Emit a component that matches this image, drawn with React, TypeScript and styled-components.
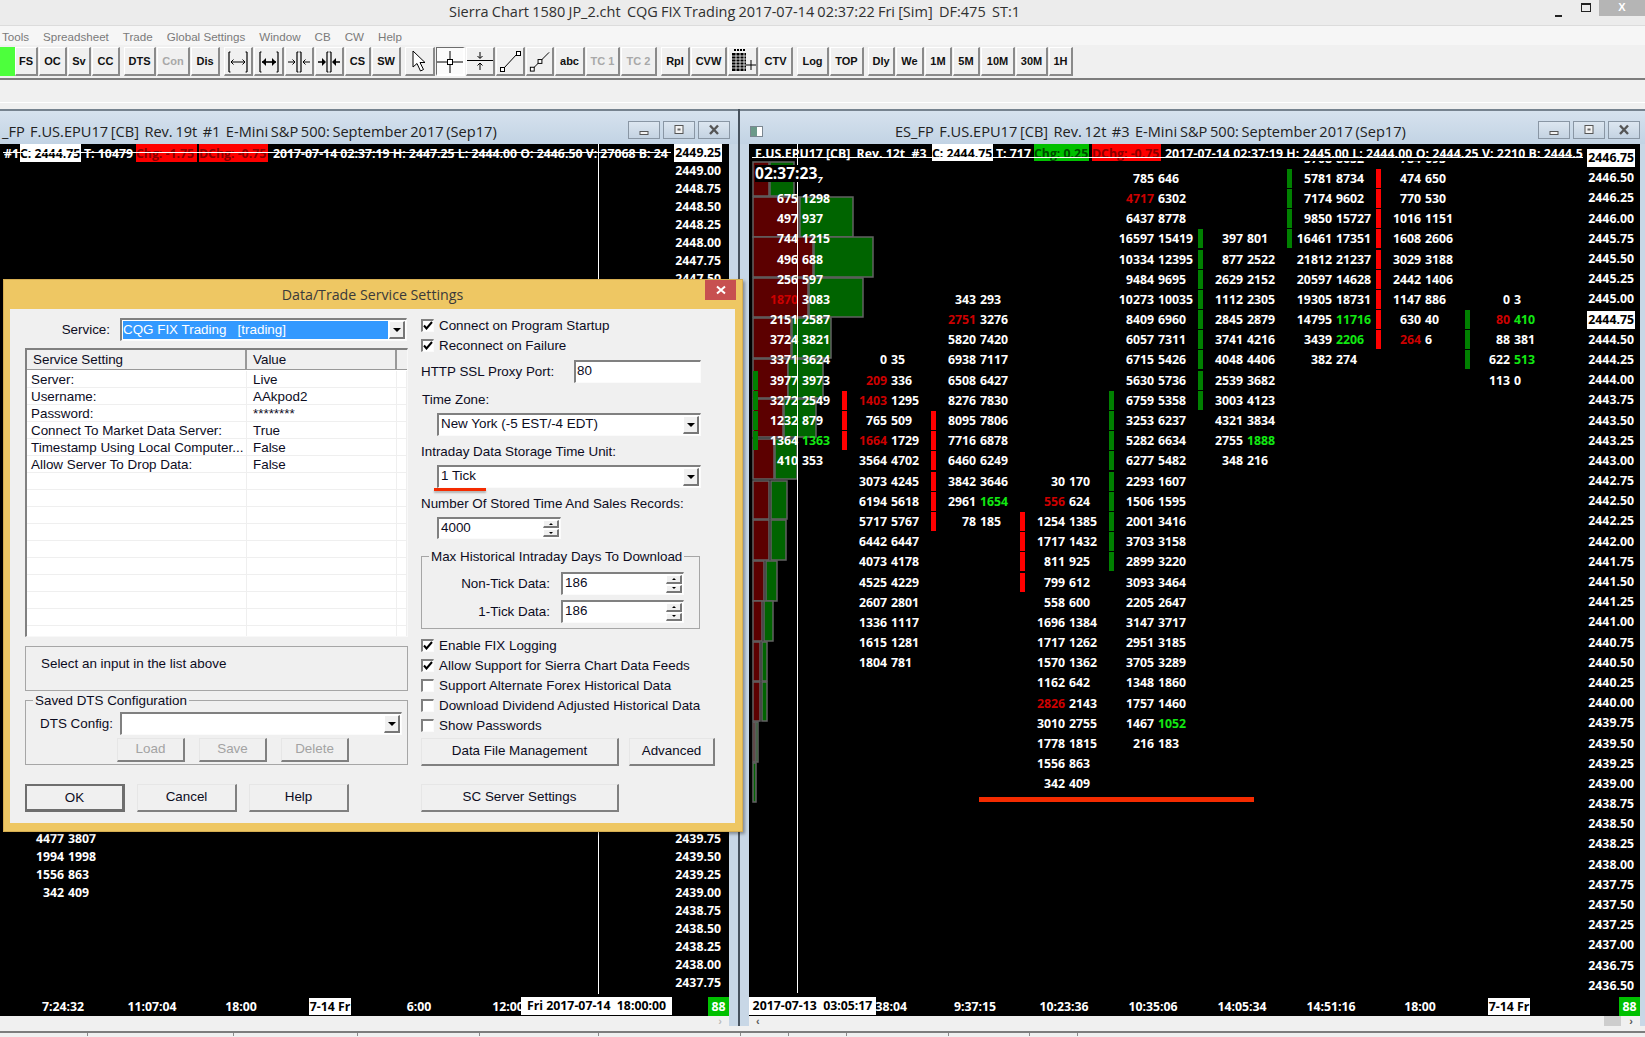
import React from "react";
import styled, { createGlobalStyle } from "styled-components";

const ui = '"Liberation Sans", Arial, sans-serif';
const seg = '"Open Sans", "Liberation Sans", sans-serif';
const num = '"Open Sans", "Liberation Sans", sans-serif';

const Global = createGlobalStyle`
  html, body { margin: 0; padding: 0; background: #f0f0f0; }
  * { box-sizing: border-box; }
`;

const Page = styled.div`
  position: relative;
  display: flex;
  flex-direction: column;
  width: 1645px;
  height: 1037px;
  overflow: hidden;
  background: #f0f0f0;
  font-family: ${ui};
`;

/* ---------- app chrome ---------- */

const TitleBar = styled.div`
  display: flex;
  height: 26px;
  padding-left: 449px;
  background: #ececec;
  border-bottom: 1px solid #dcdcdc;
  font: 14.5px/23px ${seg};
  word-spacing: -0.6px;
  color: #303030;
  white-space: pre;
`;

const Controls = styled.div`
  display: flex;
  align-items: flex-start;
  margin-left: auto;
`;

const Minimize = styled.div`
  width: 7px;
  height: 2px;
  margin: 15px 19px 0 0;
  background: #222;
`;

const Maximize = styled.div`
  width: 10px;
  height: 9px;
  margin: 3px 8px 0 0;
  border: 1px solid #222;
  border-top-width: 2px;
`;

const CloseApp = styled.div`
  width: 46px;
  height: 16px;
  background: #b5b5b5;
  color: #fff;
  font: 700 11px/14px ${ui};
  word-spacing: 0;
  text-align: center;
`;

const MenuBar = styled.div`
  display: flex;
  gap: 14px;
  height: 19px;
  padding-left: 2px;
  background: #f6f6f6;
  color: #7a7a7a;
  font-size: 11.6px;
  line-height: 21px;
`;

const Toolbar = styled.div`
  display: flex;
  gap: 4px;
  height: 35px;
  padding-top: 2px;
  background: #f0f0f0;
  border-bottom: 2px solid #7d7d7d;
`;

const GreenLamp = styled.div`
  width: 15px;
  height: 29px;
  margin-right: -4px;
  background: #4dff3c;
`;

const ToolGroup = styled.div`
  display: flex;
  gap: 1px;
`;

const ToolButton = styled.div<{ $w: number; $off?: boolean; $on?: boolean }>`
  display: flex;
  align-items: center;
  justify-content: center;
  width: ${(p) => p.$w}px;
  height: 29px;
  background: ${(p) => (p.$on ? "#fbfbfb" : "#f0f0f0")};
  border-style: solid;
  border-width: 1px 2px 2px 1px;
  border-color: ${(p) => (p.$on ? "#6d6d6d #fff #fff #6d6d6d" : "#fff #8a8a8a #8a8a8a #fff")};
  color: ${(p) => (p.$off ? "#a8a8a8" : "#111")};
  font: 700 11px ${ui};
  white-space: nowrap;
`;

const Strip = styled.div`
  height: 23px;
  margin-bottom: 6px;
  border-bottom: 1px solid #fff;
`;

const Workspace = styled.div`
  display: flex;
  height: 917px;
`;

const BottomStrip = styled.div`
  height: 10px;
  padding-top: 5px;
`;

const TabRow = styled.div`
  display: flex;
  height: 5px;
  border-top: 2px solid #7d7d7d;
`;

const Tab = styled.div<{ $w: number }>`
  width: ${(p) => p.$w}px;
  border-right: 1px solid #8a8a8a;
`;

/* ---------- chart windows ---------- */

const ChartWindow = styled.div<{ $left?: boolean }>`
  display: flex;
  flex-direction: column;
  width: ${(p) => (p.$left ? 740 : 905)}px;
  background: #c8d7e6;
  border-right: ${(p) => (p.$left ? "2px solid #47525e" : "none")};
`;

const WindowTitle = styled.div<{ $pad: number }>`
  display: flex;
  align-items: center;
  flex: none;
  height: 35px;
  padding-top: 7px;
  padding-left: ${(p) => p.$pad}px;
  background: linear-gradient(#d6e2ee, #c2d3e4);
  border-top: 2px solid #76838f;
  font: 14.6px ${seg};
  word-spacing: -1.1px;
  color: #222;
  white-space: pre;
`;

const WindowIcon = styled.span`
  width: 13px;
  height: 11px;
  margin-right: 132px;
  background: linear-gradient(90deg, #6c9a8a 50%, #fff 50%);
  border: 1px solid #7b8791;
`;

const WindowButtons = styled.div<{ $right: number }>`
  display: flex;
  gap: 3px;
  margin-top: -3px;
  margin-left: auto;
  margin-right: ${(p) => p.$right}px;
`;

const WindowButton = styled.div`
  display: flex;
  align-items: center;
  justify-content: center;
  width: 32px;
  height: 18px;
  background: linear-gradient(#dce6f0, #c4d3e2);
  border: 1px solid #8996a4;
`;

const WindowBody = styled.div<{ $left?: boolean }>`
  display: flex;
  flex: 1;
  min-height: 0;
  padding: ${(p) => (p.$left ? "0 9px 0 0" : "0 5px 0 9px")};
`;

const ChartColumn = styled.div`
  display: flex;
  flex: 1;
  flex-direction: column;
  min-width: 0;
`;

const ChartSurface = styled.div`
  position: relative;
  display: flex;
  flex-direction: column;
  height: 872px;
  overflow: hidden;
  background: #000;
  color: #fff;
  font: 700 12.3px ${num};
`;

const PlotRow = styled.div<{ $top: number }>`
  display: flex;
  flex: 1;
  min-height: 0;
  padding-top: ${(p) => p.$top}px;
`;

const FootprintGrid = styled.div<{ $pitch: number; $rows: number; $pad: number; $cols: number }>`
  position: relative;
  z-index: 1;
  display: grid;
  flex: none;
  align-content: start;
  grid-template-columns: repeat(${(p) => p.$cols}, 89px);
  grid-template-rows: repeat(${(p) => p.$rows}, ${(p) => p.$pitch}px);
  margin-left: ${(p) => p.$pad}px;
`;

const Cell = styled.div<{ $col: number; $row: number }>`
  display: grid;
  grid-column: ${(p) => p.$col};
  grid-row: ${(p) => p.$row};
  grid-template-columns: 5px 40px 4px 40px;
  align-items: center;
  white-space: nowrap;
`;

const Marker = styled.span<{ $tone: "red" | "green" }>`
  grid-column: 1;
  height: 19px;
  background: ${(p) => (p.$tone === "red" ? "#ff0000" : "#008000")};
`;

const Bid = styled.span<{ $tone?: string }>`
  grid-column: 2;
  text-align: right;
  color: ${(p) => p.$tone || "#fff"};
`;

const Ask = styled.span<{ $tone?: string }>`
  grid-column: 4;
  color: ${(p) => p.$tone || "#fff"};
`;

const PriceAxis = styled.div<{ $pitch: number; $right: number }>`
  position: relative;
  z-index: 3;
  display: grid;
  grid-auto-rows: ${(p) => p.$pitch}px;
  align-items: center;
  justify-items: end;
  align-content: start;
  margin-left: auto;
  padding-right: ${(p) => p.$right}px;
`;

const Price = styled.span<{ $on?: boolean }>`
  padding: 0 1px;
  line-height: 18px;
  background: ${(p) => (p.$on ? "#fff" : "transparent")};
  color: ${(p) => (p.$on ? "#000" : "#fff")};
`;

const Quote = styled.div<{ $width: number; $height: number; $rule: number }>`
  position: absolute;
  z-index: 2;
  top: 0;
  left: 0;
  display: flex;
  width: ${(p) => p.$width}px;
  height: ${(p) => p.$height}px;
  overflow: hidden;
  background: #000;
  white-space: pre;
  line-height: 20px;

  &::after {
    content: "";
    position: absolute;
    left: 3px;
    right: 0;
    top: ${(p) => p.$rule}px;
    height: 1px;
    background: #fff;
  }
`;

const QuoteCell = styled.span<{ $w?: number; $kind?: "white" | "red" | "green"; $ml?: number; $track?: number }>`
  flex: ${(p) => (p.$w ? `0 0 ${p.$w}px` : "1")};
  margin-left: ${(p) => p.$ml || 0}px;
  overflow: hidden;
  letter-spacing: ${(p) => p.$track || 0}px;
  background: ${(p) =>
    p.$kind === "white" ? "#fff" : p.$kind === "red" ? "#ff0000" : p.$kind === "green" ? "#00c000" : "transparent"};
  color: ${(p) =>
    p.$kind === "white" ? "#000" : p.$kind === "red" ? "#8a0000" : p.$kind === "green" ? "#004a00" : "#fff"};
`;

const CursorLine = styled.div<{ $x: number; $h: number }>`
  position: absolute;
  z-index: 2;
  top: 0;
  left: ${(p) => p.$x}px;
  width: 1px;
  height: ${(p) => p.$h}px;
  background: #fff;
`;

const Profile = styled.svg`
  position: absolute;
  top: 0;
  left: 0;
`;

const Clock = styled.div`
  position: absolute;
  z-index: 2;
  top: 21px;
  left: 6px;
  width: 69px;
  height: 17px;
  background: #000;
  font: 700 15.6px/17px ${num};
`;

const ClockTail = styled.span`
  font-size: 9px;
  font-style: italic;
  vertical-align: -4px;
`;

const SessionLine = styled.div`
  position: absolute;
  z-index: 2;
  left: 230px;
  top: 653px;
  width: 275px;
  height: 5px;
  background: #f42b00;
`;

const TimeAxis = styled.div<{ $pad: number }>`
  position: relative;
  display: flex;
  flex: none;
  align-items: center;
  height: 19px;
  padding-left: ${(p) => p.$pad}px;
`;

const TimeLabel = styled.span`
  flex: 0 0 89px;
  text-align: center;
`;

const DayBox = styled.span`
  padding: 0 1px;
  background: #fff;
  color: #000;
  line-height: 18px;
`;

const StampBox = styled.span<{ $x: number; $w: number }>`
  position: absolute;
  top: 0;
  left: ${(p) => p.$x}px;
  width: ${(p) => p.$w}px;
  height: 18px;
  background: #fff;
  color: #000;
  line-height: 18px;
  text-align: center;
  white-space: pre;
`;

const CountBox = styled.span`
  position: absolute;
  top: 0;
  right: 0;
  width: 21px;
  height: 19px;
  background: #00c000;
  line-height: 19px;
  text-align: center;
`;

const ScrollRow = styled.div`
  display: flex;
  align-items: center;
  flex: none;
  height: 10px;
  padding: 0 7px;
  background: #f0f0f0;
  color: #555;
  font: 700 11px/10px ${ui};
`;

const ThumbArea = styled.div`
  display: flex;
  align-items: center;
  gap: 8px;
  margin-left: auto;
`;

const Thumb = styled.span`
  width: 17px;
  height: 10px;
  background: #cdcdcd;
`;

const Faint = styled.span`
  color: #bbb;
`;

/* ---------- settings dialog ---------- */

const Dialog = styled.div`
  position: absolute;
  z-index: 10;
  top: 279px;
  left: 3px;
  display: flex;
  flex-direction: column;
  width: 740px;
  height: 553px;
  padding: 0 7px 8px 6px;
  background: #eec763;
  border: 1px solid #d6ae52;
  box-shadow: 2px 2px 3px rgba(0, 0, 0, 0.35);
  color: #0c0c1e;
  font: 13.4px ${ui};
`;

const DialogTitle = styled.div`
  position: relative;
  flex: none;
  height: 29px;
  font: 14.2px/29px ${seg};
  color: #3a3a3a;
  text-align: center;
`;

const DialogClose = styled.div`
  position: absolute;
  top: 0;
  right: -1px;
  display: flex;
  align-items: center;
  justify-content: center;
  width: 31px;
  height: 20px;
  background: #c75050;
`;

const Client = styled.div`
  display: flex;
  flex: 1;
  gap: 13px;
  padding: 6px 0 0 15px;
  background: #f0f0f0;
`;

const LeftPane = styled.div`
  display: flex;
  flex-direction: column;
  width: 383px;
  padding-top: 3px;
`;

const RightPane = styled.div`
  position: relative;
  display: flex;
  flex-direction: column;
  width: 294px;
`;

const FieldRow = styled.div<{ $mt?: number }>`
  display: flex;
  align-items: center;
  margin-top: ${(p) => p.$mt || 0}px;
`;

const FieldLabel = styled.span<{ $w: number; $right?: boolean }>`
  flex: 0 0 ${(p) => p.$w}px;
  text-align: ${(p) => (p.$right ? "right" : "left")};
  white-space: nowrap;
`;

const Sunken = styled.div<{ $w: number; $h?: number; $ml?: number }>`
  position: relative;
  display: flex;
  align-items: center;
  justify-content: space-between;
  flex: none;
  width: ${(p) => p.$w}px;
  height: ${(p) => p.$h || 23}px;
  margin-left: ${(p) => p.$ml || 0}px;
  padding: 1px 1px 1px 2px;
  background: #fff;
  border-style: solid;
  border-width: 2px 1px 1px 2px;
  border-color: #808080 #fbfbfb #fbfbfb #808080;
  white-space: pre;
`;

const FieldText = styled.span<{ $tight?: boolean }>`
  margin-bottom: 3px;
  margin-left: ${(p) => (p.$tight ? -1 : 0)}px;
`;

const Selected = styled.span`
  flex: 1;
  align-self: stretch;
  margin-right: 1px;
  margin-left: -1px;
  background: #3399ff;
  color: #fff;
  line-height: 17px;
`;

const DropButton = styled.span`
  display: flex;
  align-items: center;
  justify-content: center;
  flex: none;
  align-self: stretch;
  width: 16px;
  background: #f0f0f0;
  border-style: solid;
  border-width: 1px 2px 2px 1px;
  border-color: #fff #777 #777 #fff;

  &::after {
    content: "";
    border-style: solid;
    border-width: 4px 4px 0;
    border-color: #000 transparent transparent;
  }
`;

const SpinStack = styled.span`
  display: flex;
  flex-direction: column;
  flex: none;
  gap: 1px;
  align-self: stretch;
  width: 16px;
`;

const SpinPart = styled.span<{ $up?: boolean }>`
  display: flex;
  align-items: center;
  justify-content: center;
  flex: 1;
  background: #f0f0f0;
  border-style: solid;
  border-width: 1px 2px 2px 1px;
  border-color: #fff #777 #777 #fff;

  &::after {
    content: "";
    border-style: solid;
    border-width: ${(p) => (p.$up ? "0 2px 2px" : "2px 2px 0")};
    border-color: ${(p) => (p.$up ? "transparent transparent #000" : "#000 transparent transparent")};
  }
`;

const ListBox = styled.div`
  flex: none;
  height: 289px;
  margin-top: 7px;
  overflow: hidden;
  background: #fff;
  border-style: solid;
  border-width: 2px 1px 1px 2px;
  border-color: #808080 #f8f8f8 #f8f8f8 #808080;
`;

const ListHead = styled.div`
  display: grid;
  grid-template-columns: 220px 150px 1fr;
  height: 20px;
  margin-bottom: 1px;
  background: #f0f0f0;
  border-bottom: 1px solid #999;
  line-height: 19px;
`;

const HeadCell = styled.span`
  padding-left: 6px;
  border-right: 2px solid #999;
`;

const ListRow = styled.div`
  display: grid;
  grid-template-columns: 220px 150px 1fr;
  height: 17px;
  border-bottom: 1px solid #efefef;
  line-height: 18px;
  white-space: nowrap;
`;

const RowCell = styled.span`
  padding-left: 4px;
  overflow: hidden;
  border-right: 1px solid #efefef;

  & + & {
    padding-left: 6px;
  }
`;

const HelpBox = styled.div`
  flex: none;
  height: 45px;
  margin-top: 9px;
  padding: 9px 0 0 15px;
  border: 1px solid #a6a6a6;
`;

const GroupBox = styled.div<{ $h: number; $w?: number; $mt: number; $pt: number }>`
  position: relative;
  flex: none;
  width: ${(p) => (p.$w ? `${p.$w}px` : "auto")};
  height: ${(p) => p.$h}px;
  margin-top: ${(p) => p.$mt}px;
  padding-top: ${(p) => p.$pt}px;
  border: 1px solid #a6a6a6;
`;

const GroupLegend = styled.span`
  position: absolute;
  top: -8px;
  left: 7px;
  padding: 0 2px;
  background: #f0f0f0;
  line-height: 15px;
  white-space: nowrap;
`;

const ButtonRow = styled.div<{ $mt: number; $gap: number; $ml?: number }>`
  display: flex;
  gap: ${(p) => p.$gap}px;
  margin-top: ${(p) => p.$mt}px;
  margin-left: ${(p) => p.$ml || 0}px;
`;

const PushButton = styled.div<{ $w: number; $h?: number; $off?: boolean; $main?: boolean }>`
  flex: none;
  width: ${(p) => p.$w}px;
  height: ${(p) => p.$h || 28}px;
  background: #f0f0f0;
  border-style: solid;
  border-width: ${(p) => (p.$main ? "2px 3px 3px 2px" : "1px 2px 2px 1px")};
  border-color: ${(p) => (p.$main ? "#6e6e6e" : "#e6e6e6 #808080 #808080 #e6e6e6")};
  color: ${(p) => (p.$off ? "#a3a3a3" : "#0c0c1e")};
  line-height: ${(p) => (p.$h || 28) - 4}px;
  text-align: center;
  white-space: nowrap;
`;

const CheckRow = styled.div`
  display: flex;
  align-items: center;
  gap: 5px;
  height: 20px;
  white-space: nowrap;
`;

const CheckBox = styled.span`
  display: flex;
  align-items: center;
  justify-content: center;
  width: 13px;
  height: 13px;
  background: #fff;
  border-style: solid;
  border-width: 2px 1px 1px 2px;
  border-color: #808080 #fbfbfb #fbfbfb #808080;
`;

const PlainLabel = styled.div<{ $mt: number; $ml?: number }>`
  height: 18px;
  margin-top: ${(p) => p.$mt}px;
  margin-left: ${(p) => p.$ml || 0}px;
  line-height: 18px;
  white-space: nowrap;
`;

const RedMark = styled.div`
  position: absolute;
  top: 173px;
  left: 13px;
  width: 52px;
  height: 3px;
  background: #f42b00;
  box-shadow: 0 2px 2px rgba(0, 0, 0, 0.25);
`;

/* ---------- icons ---------- */

type GlyphName = "spread" | "spreadBold" | "pinch" | "pinchBold" | "pointer" | "cross" | "level" | "line" | "ray" | "table";

const Glyph = ({ name }: { name: GlyphName }) => {
  const stems = (a: number, b: number) => (
    <path d={`M${a} 4v20M${b} 4v20M${a} 4h1.5M${b} 4h-1.5M${a} 24h1.5M${b} 24h-1.5`} stroke="#000" strokeWidth="1.2" fill="none" />
  );
  return (
    <svg width="26" height="26" viewBox="0 0 26 26">
      {name === "spread" && (
        <>
          {stems(4, 22)}
          <path d="M6 14h14M8.500 11.500 6 14l2.500 2.500M17.500 11.500 20 14l-2.500 2.500" stroke="#000" fill="none" />
        </>
      )}
      {name === "spreadBold" && (
        <>
          {stems(4, 22)}
          <path d="M6 14h14" stroke="#000" strokeWidth="1.6" />
          <path d="M10 10v8l-4-4zM16 10v8l4-4z" />
        </>
      )}
      {name === "pinch" && (
        <>
          {stems(11, 15)}
          <path d="M2 14h7M6.500 11.500 9 14l-2.500 2.500M17 14h7M19.500 11.500 17 14l2.500 2.500" stroke="#000" fill="none" />
        </>
      )}
      {name === "pinchBold" && (
        <>
          {stems(11, 15)}
          <path d="M2 14h5M19 14h5" stroke="#000" strokeWidth="1.6" />
          <path d="M6 10v8l4-4zM20 10v8l-4-4z" />
        </>
      )}
      {name === "pointer" && <path d="M6 3v16l4-3.500 3.500 7.500 3-1.500-3.500-7h5z" fill="#fff" stroke="#000" />}
      {name === "cross" && (
        <>
          <path d="M0 14h26M13 3v22" stroke="#000" />
          <rect x="10.500" y="11.500" width="5" height="5" fill="#fff" stroke="#000" />
        </>
      )}
      {name === "level" && <path d="M0 12.500h26M13 4v6M10.500 8 13 10.500 15.500 8M13 15v7M10.500 17.500 13 15l2.500 2.500" stroke="#000" fill="none" />}
      {name === "line" && (
        <>
          <path d="M7 20 20 6" stroke="#000" />
          <rect x="3.500" y="19.500" width="4" height="4" fill="#fff" stroke="#000" />
          <rect x="19.500" y="3.500" width="4" height="4" fill="#fff" stroke="#000" />
        </>
      )}
      {name === "ray" && (
        <>
          <path d="M6 21 23 4" stroke="#000" />
          <rect x="3.500" y="19.500" width="4" height="4" fill="#fff" stroke="#000" />
          <rect x="11.500" y="11.500" width="4" height="4" fill="#fff" stroke="#000" />
        </>
      )}
      {name === "table" && (
        <>
          <path d="M4 2h11" stroke="#000" strokeDasharray="2 1" strokeWidth="2" />
          <rect x="2" y="5" width="14" height="18" />
          <path d="M2 8h14M2 11h14M2 14h14M2 17h14M2 20h14M6 5v18M10 5v18M14 5v18" stroke="#fff" strokeWidth=".8" />
          <path d="M16 17h10M21 12v10" stroke="#000" />
        </>
      )}
    </svg>
  );
};

const Tick = () => (
  <svg width="10" height="9" viewBox="0 0 10 9">
    <path d="M1 4.500 3.500 7.500 9 1" stroke="#000" strokeWidth="2" fill="none" />
  </svg>
);

const WinGlyph = ({ kind }: { kind: "min" | "max" | "close" }) => (
  <svg width="14" height="12" viewBox="0 0 14 12">
    {kind === "min" && <rect x="3" y="7.500" width="8" height="3" fill="#f4f4f4" stroke="#555" />}
    {kind === "max" && (
      <>
        <rect x="3" y="1.500" width="8" height="8" fill="#f4f4f4" stroke="#555" />
        <rect x="5.500" y="4.500" width="3" height="2" fill="#666" />
      </>
    )}
    {kind === "close" && <path d="M3 1.500 11 10M11 1.500 3 10" stroke="#555" strokeWidth="2.400" />}
  </svg>
);

/* ---------- data ---------- */

const RED = "#cc0000";
const GREEN = "#12e812";

const toolGroups: { label?: string; icon?: GlyphName; w: number; off?: boolean; on?: boolean }[][] = [
  [{ label: "FS", w: 23 }, { label: "OC", w: 28 }, { label: "Sv", w: 23 }, { label: "CC", w: 28 }],
  [{ label: "DTS", w: 32 }, { label: "Con", w: 33, off: true }, { label: "Dis", w: 29 }],
  [
    { icon: "spread", w: 29 },
    { icon: "spreadBold", w: 30 },
    { icon: "pinch", w: 29 },
    { icon: "pinchBold", w: 29 },
    { label: "CS", w: 26 },
    { label: "SW", w: 29 },
  ],
  [
    { icon: "pointer", w: 30 },
    { icon: "cross", w: 29, on: true },
    { icon: "level", w: 29 },
    { icon: "line", w: 29 },
    { icon: "ray", w: 28 },
    { label: "abc", w: 30 },
    { label: "TC 1", w: 34, off: true },
    { label: "TC 2", w: 36, off: true },
  ],
  [{ label: "Rpl", w: 29 }, { label: "CVW", w: 36 }, { icon: "table", w: 30 }, { label: "CTV", w: 34 }],
  [{ label: "Log", w: 32 }, { label: "TOP", w: 34 }],
  [
    { label: "Dly", w: 27 },
    { label: "We", w: 28 },
    { label: "1M", w: 27 },
    { label: "5M", w: 27 },
    { label: "10M", w: 34 },
    { label: "30M", w: 32 },
    { label: "1H", w: 24 },
  ],
];

// a trailing r or g on a figure marks it as a red or green print
type FootColumn = { col: number; start: number; marks?: [number, number, "red" | "green"]; rows: string[] };

const footprint: FootColumn[] = [
  {
    col: 1, start: 1, marks: [10, 13, "green"],
    rows: ["675 1298", "497 937", "744 1215", "496 688", "256 597", "1870r 3083", "2151 2587", "3724 3821", "3371 3624", "3977 3973", "3272 2549", "1232 879", "1364 1363g", "410 353"],
  },
  {
    col: 2, start: 9, marks: [11, 13, "red"],
    rows: ["0 35", "209r 336", "1403r 1295", "765 509", "1664r 1729", "3564 4702", "3073 4245", "6194 5618", "5717 5767", "6442 6447", "4073 4178", "4525 4229", "2607 2801", "1336 1117", "1615 1281", "1804 781"],
  },
  {
    col: 3, start: 6, marks: [12, 17, "red"],
    rows: ["343 293", "2751r 3276", "5820 7420", "6938 7117", "6508 6427", "8276 7830", "8095 7806", "7716 6878", "6460 6249", "3842 3646", "2961 1654g", "78 185"],
  },
  {
    col: 4, start: 15, marks: [17, 20, "red"],
    rows: ["30 170", "556r 624", "1254 1385", "1717 1432", "811 925", "799 612", "558 600", "1696 1384", "1717 1262", "1570 1362", "1162 642", "2826r 2143", "3010 2755", "1778 1815", "1556 863", "342 409"],
  },
  {
    col: 5, start: 0, marks: [11, 19, "green"],
    rows: ["785 646", "4717r 6302", "6437 8778", "16597 15419", "10334 12395", "9484 9695", "10273 10035", "8409 6960", "6057 7311", "6715 5426", "5630 5736", "6759 5358", "3253 6237", "5282 6634", "6277 5482", "2293 1607", "1506 1595", "2001 3416", "3703 3158", "2899 3220", "3093 3464", "2205 2647", "3147 3717", "2951 3185", "3705 3289", "1348 1860", "1757 1460", "1467 1052g", "216 183"],
  },
  {
    col: 6, start: 3, marks: [3, 11, "green"],
    rows: ["397 801", "877 2522", "2629 2152", "1112 2305", "2845 2879", "3741 4216", "4048 4406", "2539 3682", "3003 4123", "4321 3834", "2755 1888g", "348 216"],
  },
  {
    col: 7, start: -1, marks: [0, 3, "green"],
    rows: ["5708 8652", "5781 8734", "7174 9602", "9850 15727", "16461 17351", "21812 21237", "20597 14628", "19305 18731", "14795 11716g", "3439 2206g", "382 274"],
  },
  {
    col: 8, start: -1, marks: [0, 8, "red"],
    rows: ["784 695", "474 650", "770 530", "1016 1151", "1608 2606", "3029 3188", "2442 1406", "1147 886", "630 40", "264r 6"],
  },
  {
    col: 9, start: 6, marks: [7, 9, "green"],
    rows: ["0 3", "80r 410g", "88 381", "622 513g", "113 0"],
  },
];

const oldFootprint: FootColumn[] = [
  { col: 1, start: 38, rows: ["4477 3807", "1994 1998", "1556 863", "342 409"] },
];

const profileBars = [
  [163, 197, 769, 770, 794],
  [198, 238, 799, 800, 853],
  [238, 278, 813, 814, 873],
  [279, 318, 808, 809, 863],
  [319, 359, 791, 792, 831],
  [360, 399, 788, 788, 823],
  [400, 438, 783, 784, 816],
  [440, 480, 774, 775, 797],
  [482, 520, 769, 771, 787],
  [521, 561, 769, 771, 786],
  [562, 602, 764, 766, 777],
  [602, 642, 762, 764, 773],
  [643, 682, 760, 762, 767],
  [683, 722, 760, 762, 767],
  [723, 763, 755, 756, 758],
  [764, 803, 753, 753, 756],
];

const settings = [
  ["Server:", "Live"],
  ["Username:", "AAkpod2"],
  ["Password:", "********"],
  ["Connect To Market Data Server:", "True"],
  ["Timestamp Using Local Computer...", "False"],
  ["Allow Server To Drop Data:", "False"],
];

const tabWidths = [88, 146, 124, 122, 119, 142, 48, 58, 102, 81, 48];

const parseFigure = (text: string) => {
  const last = text[text.length - 1];
  if (last === "r") return { value: text.slice(0, -1), tone: RED };
  if (last === "g") return { value: text.slice(0, -1), tone: GREEN };
  return { value: text, tone: undefined };
};

// offset maps a price index to its grid row
const FootCells = ({ columns, offset }: { columns: FootColumn[]; offset: number }) => (
  <>
    {columns.map((c) =>
      c.rows.map((row, i) => {
        const index = c.start + i;
        const [left, right] = row.split(" ").map(parseFigure);
        const marked = c.marks && index >= c.marks[0] && index <= c.marks[1];
        return (
          <Cell key={`${c.col}-${index}`} $col={c.col} $row={index + offset}>
            {marked && <Marker $tone={c.marks![2]} />}
            <Bid $tone={left.tone}>{left.value}</Bid>
            <Ask $tone={right.tone}>{right.value}</Ask>
          </Cell>
        );
      })
    )}
  </>
);

const prices = (from: number, count: number) =>
  Array.from({ length: count }, (_, i) => (from - i * 0.25).toFixed(2));

const Combo = ({ w, ml, children }: { w: number; ml?: number; children?: React.ReactNode }) => (
  <Sunken $w={w} $ml={ml}>
    <FieldText>{children}</FieldText>
    <DropButton />
  </Sunken>
);

const Spin = ({ w, h, ml, children }: { w: number; h?: number; ml?: number; children: React.ReactNode }) => (
  <Sunken $w={w} $h={h} $ml={ml}>
    <FieldText>{children}</FieldText>
    <SpinStack>
      <SpinPart $up />
      <SpinPart />
    </SpinStack>
  </Sunken>
);

const Check = ({ on, children }: { on?: boolean; children: React.ReactNode }) => (
  <CheckRow>
    <CheckBox>{on && <Tick />}</CheckBox>
    {children}
  </CheckRow>
);

const App = () => (
  <Page>
    <Global />
    <TitleBar>
      {"Sierra Chart 1580 JP_2.cht  CQG FIX Trading 2017-07-14 02:37:22 Fri [Sim]  DF:475  ST:1"}
      <Controls>
        <Minimize />
        <Maximize />
        <CloseApp>X</CloseApp>
      </Controls>
    </TitleBar>
    <MenuBar>
      {["Tools", "Spreadsheet", "Trade", "Global Settings", "Window", "CB", "CW", "Help"].map((m) => (
        <span key={m}>{m}</span>
      ))}
    </MenuBar>
    <Toolbar>
      <GreenLamp />
      {toolGroups.map((group, g) => (
        <ToolGroup key={g}>
          {group.map((b, i) => (
            <ToolButton key={i} $w={b.w} $off={b.off} $on={b.on}>
              {b.icon ? <Glyph name={b.icon} /> : b.label}
            </ToolButton>
          ))}
        </ToolGroup>
      ))}
    </Toolbar>
    <Strip />
    <Workspace>
      <ChartWindow $left>
        <WindowTitle $pad={2}>
          {"_FP  F.US.EPU17 [CB]  Rev. 19t  #1  E-Mini S&P 500: September 2017 (Sep17)"}
          <WindowButtons $right={8}>
            <WindowButton><WinGlyph kind="min" /></WindowButton>
            <WindowButton><WinGlyph kind="max" /></WindowButton>
            <WindowButton><WinGlyph kind="close" /></WindowButton>
          </WindowButtons>
        </WindowTitle>
        <WindowBody $left>
          <ChartColumn>
            <ChartSurface>
              <PlotRow $top={0}>
                <FootprintGrid $pitch={18.05} $rows={47} $pad={19} $cols={1}>
                  <FootCells columns={oldFootprint} offset={1} />
                </FootprintGrid>
                <PriceAxis $pitch={18.05} $right={7}>
                  {prices(2449.25, 47).map((p, i) => (
                    <Price key={p} $on={i === 0}>{p}</Price>
                  ))}
                </PriceAxis>
              </PlotRow>
              <Quote $width={671} $height={18} $rule={8}>
                <QuoteCell $w={16} $ml={4}>#1</QuoteCell>
                <QuoteCell $w={61} $kind="white">C: 2444.75</QuoteCell>
                <QuoteCell $w={52} $ml={3}>T: 10479</QuoteCell>
                <QuoteCell $w={61} $kind="red">Chg: -1.75</QuoteCell>
                <QuoteCell $w={69} $ml={2} $kind="red">DChg: -0.75</QuoteCell>
                <QuoteCell $ml={5}>2017-07-14 02:37:19 H: 2447.25 L: 2444.00 O: 2446.50 V: 27068 B: 24</QuoteCell>
              </Quote>
              <CursorLine $x={598} $h={850} />
              <TimeAxis $pad={18.5}>
                <TimeLabel>7:24:32</TimeLabel>
                <TimeLabel>11:07:04</TimeLabel>
                <TimeLabel>18:00</TimeLabel>
                <TimeLabel><DayBox>7-14 Fr</DayBox></TimeLabel>
                <TimeLabel>6:00</TimeLabel>
                <TimeLabel>12:00</TimeLabel>
                <StampBox $x={521} $w={151}>{"Fri 2017-07-14  18:00:00"}</StampBox>
                <CountBox>88</CountBox>
              </TimeAxis>
            </ChartSurface>
            <ScrollRow>
              <ThumbArea><Faint>›</Faint></ThumbArea>
            </ScrollRow>
          </ChartColumn>
        </WindowBody>
      </ChartWindow>

      <ChartWindow>
        <WindowTitle $pad={10}>
          <WindowIcon />
          {"ES_FP  F.US.EPU17 [CB]  Rev. 12t  #3  E-Mini S&P 500: September 2017 (Sep17)"}
          <WindowButtons $right={5}>
            <WindowButton><WinGlyph kind="min" /></WindowButton>
            <WindowButton><WinGlyph kind="max" /></WindowButton>
            <WindowButton><WinGlyph kind="close" /></WindowButton>
          </WindowButtons>
        </WindowTitle>
        <WindowBody>
          <ChartColumn>
            <ChartSurface>
              <Profile width="125" height="665" viewBox="749 145 125 665">
                {profileBars.map(([y0, y1, redEnd, greenStart, greenEnd]) => (
                  <g key={y0} stroke="#626262" strokeWidth="1.5">
                    <rect x="753" y={y0} width={redEnd - 753} height={y1 - y0} fill="#5c0000" />
                    <rect x={greenStart} y={y0} width={greenEnd - greenStart} height={y1 - y0} fill="#006400" />
                  </g>
                ))}
              </Profile>
              <PlotRow $top={4}>
                <FootprintGrid $pitch={20.2} $rows={42} $pad={4} $cols={9}>
                  <FootCells columns={footprint} offset={2} />
                </FootprintGrid>
                <PriceAxis $pitch={20.2} $right={5}>
                  {prices(2446.75, 42).map((p, i) => (
                    <Price key={p} $on={i === 0 || i === 8}>{p}</Price>
                  ))}
                </PriceAxis>
              </PlotRow>
              <Quote $width={834} $height={17} $rule={13}>
                <QuoteCell $w={177} $ml={6}>{"F.US.EPU17 [CB]  Rev. 12t  #3"}</QuoteCell>
                <QuoteCell $w={61} $kind="white">C: 2444.75</QuoteCell>
                <QuoteCell $w={38} $ml={3}>T: 717</QuoteCell>
                <QuoteCell $w={55} $kind="green">Chg: 0.25</QuoteCell>
                <QuoteCell $w={69} $ml={3} $kind="red">DChg: -0.75</QuoteCell>
                <QuoteCell $ml={4} $track={0.08}>2017-07-14 02:37:19 H: 2445.00 L: 2444.00 O: 2444.25 V: 2210 B: 2444.50</QuoteCell>
              </Quote>
              <CursorLine $x={48} $h={849} />
              <Clock>02:37:23<ClockTail>7</ClockTail></Clock>
              <SessionLine />
              <TimeAxis $pad={92.5}>
                <TimeLabel>8:38:04</TimeLabel>
                <TimeLabel>9:37:15</TimeLabel>
                <TimeLabel>10:23:36</TimeLabel>
                <TimeLabel>10:35:06</TimeLabel>
                <TimeLabel>14:05:34</TimeLabel>
                <TimeLabel>14:51:16</TimeLabel>
                <TimeLabel>18:00</TimeLabel>
                <TimeLabel><DayBox>7-14 Fr</DayBox></TimeLabel>
                <StampBox $x={0} $w={127}>{"2017-07-13  03:05:17"}</StampBox>
                <CountBox>88</CountBox>
              </TimeAxis>
            </ChartSurface>
            <ScrollRow>
              <span>‹</span>
              <ThumbArea><Thumb /><span>›</span></ThumbArea>
            </ScrollRow>
          </ChartColumn>
        </WindowBody>
      </ChartWindow>
    </Workspace>
    <BottomStrip>
      <TabRow>
        {tabWidths.map((w, i) => (
          <Tab key={i} $w={w} />
        ))}
      </TabRow>
    </BottomStrip>

    <Dialog>
      <DialogTitle>
        Data/Trade Service Settings
        <DialogClose>
          <svg width="10" height="10" viewBox="0 0 10 10">
            <path d="M1 1.500 9 8.500M9 1.500 1 8.500" stroke="#fff" strokeWidth="2" />
          </svg>
        </DialogClose>
      </DialogTitle>
      <Client>
        <LeftPane>
          <FieldRow>
            <FieldLabel $w={85} $right>Service:</FieldLabel>
            <Sunken $w={287} $ml={10}>
              <Selected>{"CQG FIX Trading   [trading]"}</Selected>
              <DropButton />
            </Sunken>
          </FieldRow>
          <ListBox>
            <ListHead>
              <HeadCell>Service Setting</HeadCell>
              <HeadCell>Value</HeadCell>
            </ListHead>
            {Array.from({ length: 16 }, (_, i) => (
              <ListRow key={i}>
                <RowCell>{settings[i]?.[0]}</RowCell>
                <RowCell>{settings[i]?.[1]}</RowCell>
                <RowCell />
              </ListRow>
            ))}
          </ListBox>
          <HelpBox>Select an input in the list above</HelpBox>
          <GroupBox $h={65} $mt={9} $pt={11}>
            <GroupLegend>Saved DTS Configuration</GroupLegend>
            <FieldRow>
              <FieldLabel $w={87} $right>DTS Config:</FieldLabel>
              <Combo w={282} ml={7} />
            </FieldRow>
            <ButtonRow $mt={3} $gap={14} $ml={91}>
              <PushButton $w={68} $h={24} $off>Load</PushButton>
              <PushButton $w={68} $h={24} $off>Save</PushButton>
              <PushButton $w={68} $h={24} $off>Delete</PushButton>
            </ButtonRow>
          </GroupBox>
          <ButtonRow $mt={19} $gap={12}>
            <PushButton $w={100} $main>OK</PushButton>
            <PushButton $w={100}>Cancel</PushButton>
            <PushButton $w={100}>Help</PushButton>
          </ButtonRow>
        </LeftPane>
        <RightPane>
          <Check on>Connect on Program Startup</Check>
          <Check on>Reconnect on Failure</Check>
          <FieldRow $mt={5}>
            <FieldLabel $w={153}>HTTP SSL Proxy Port:</FieldLabel>
            <Sunken $w={127}><FieldText $tight>80</FieldText></Sunken>
          </FieldRow>
          <PlainLabel $mt={8} $ml={1}>Time Zone:</PlainLabel>
          <FieldRow $mt={4}>
            <Combo w={264} ml={16}>New York (-5 EST/-4 EDT)</Combo>
          </FieldRow>
          <PlainLabel $mt={7}>Intraday Data Storage Time Unit:</PlainLabel>
          <FieldRow $mt={4}>
            <Combo w={264} ml={16}>1 Tick</Combo>
          </FieldRow>
          <RedMark />
          <PlainLabel $mt={7}>Number Of Stored Time And Sales Records:</PlainLabel>
          <FieldRow $mt={4}>
            <Spin w={124} h={22} ml={16}>4000</Spin>
          </FieldRow>
          <GroupBox $h={73} $w={279} $mt={17} $pt={15}>
            <GroupLegend>Max Historical Intraday Days To Download</GroupLegend>
            <FieldRow>
              <FieldLabel $w={128} $right>Non-Tick Data:</FieldLabel>
              <Spin w={123} ml={11}>186</Spin>
            </FieldRow>
            <FieldRow $mt={5}>
              <FieldLabel $w={128} $right>1-Tick Data:</FieldLabel>
              <Spin w={123} ml={11}>186</Spin>
            </FieldRow>
          </GroupBox>
          <FieldRow $mt={6} />
          <Check on>Enable FIX Logging</Check>
          <Check on>Allow Support for Sierra Chart Data Feeds</Check>
          <Check>Support Alternate Forex Historical Data</Check>
          <Check>Download Dividend Adjusted Historical Data</Check>
          <Check>Show Passwords</Check>
          <ButtonRow $mt={3} $gap={10}>
            <PushButton $w={198}>Data File Management</PushButton>
            <PushButton $w={86}>Advanced</PushButton>
          </ButtonRow>
          <ButtonRow $mt={18} $gap={0}>
            <PushButton $w={198}>SC Server Settings</PushButton>
          </ButtonRow>
        </RightPane>
      </Client>
    </Dialog>
  </Page>
);

export default App;
